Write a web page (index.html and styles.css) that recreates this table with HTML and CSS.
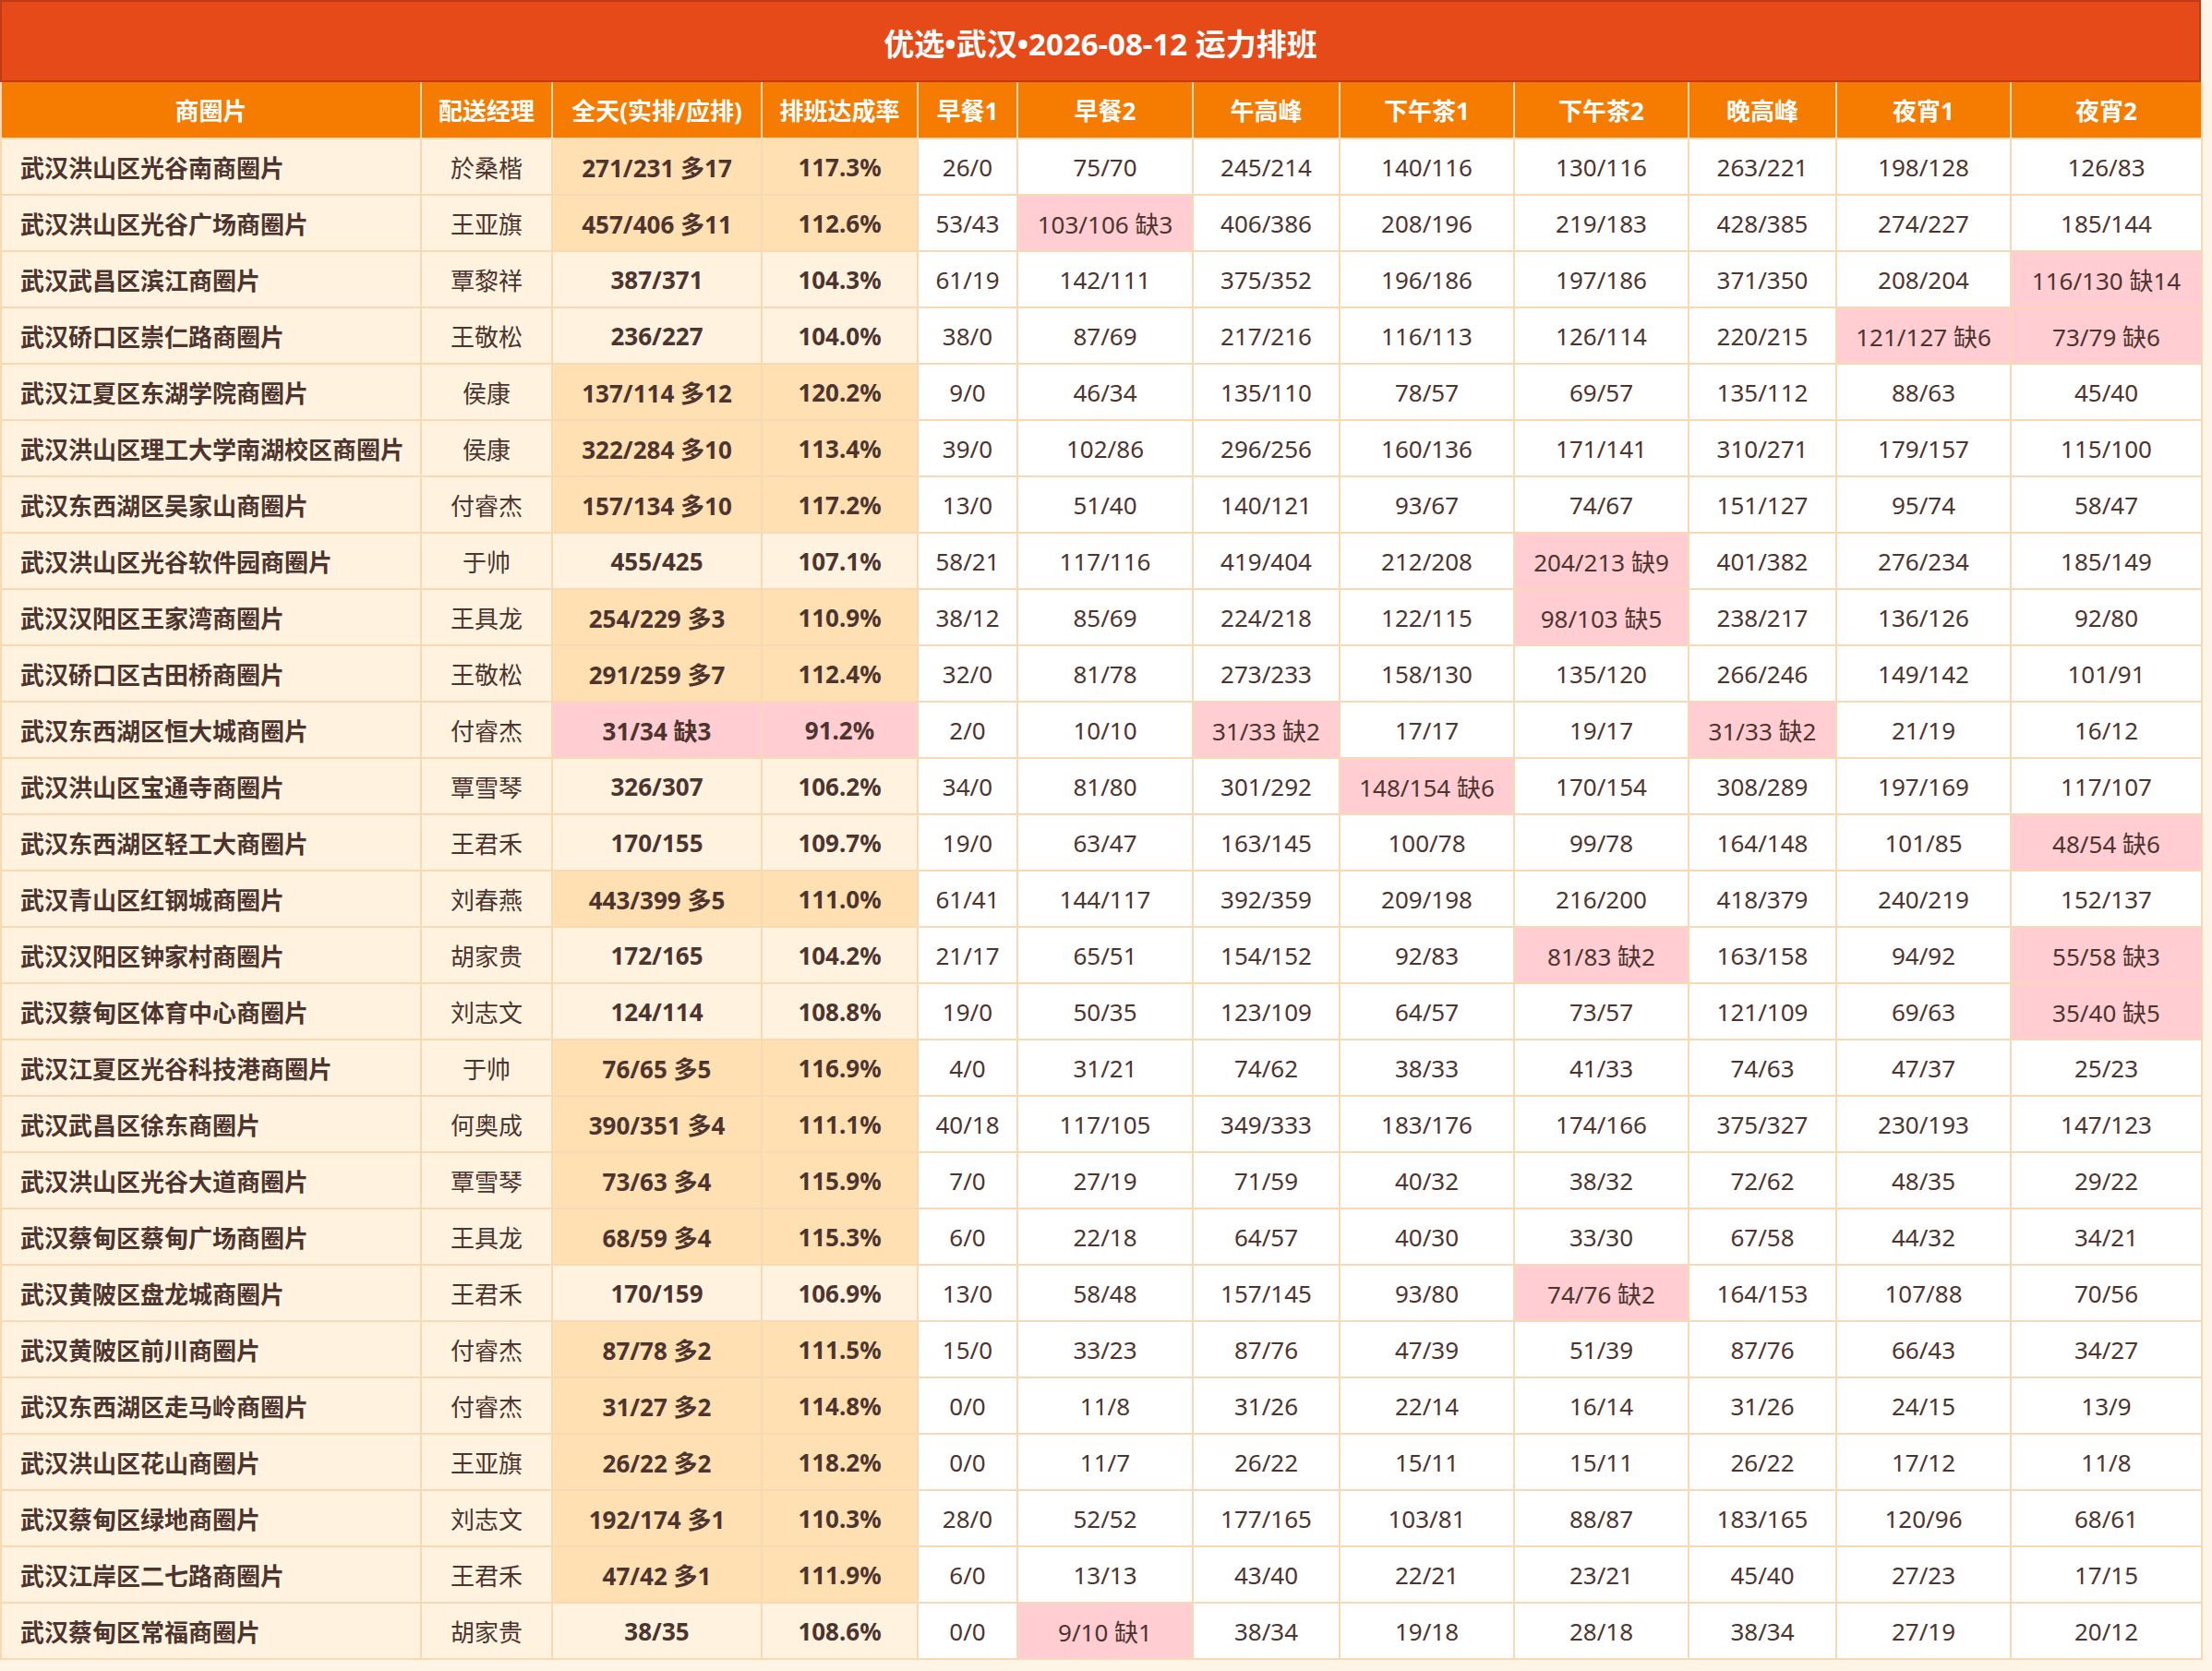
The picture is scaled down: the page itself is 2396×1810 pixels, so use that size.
FILE: index.html
```html
<!DOCTYPE html>
<html lang="zh-CN">
<head>
<meta charset="utf-8">
<title>运力排班</title>
<link rel="stylesheet" href="styles.css">
</head>
<body>
<div class="sheet">
  <div class="title">优选•武汉•2026-08-12 运力排班</div>
  <table class="grid">
    <colgroup>
      <col class="c-name"><col class="c-mgr"><col class="c-total"><col class="c-rate">
      <col class="c-b1"><col class="c-b2"><col class="c-noon"><col class="c-t1"><col class="c-t2"><col class="c-eve"><col class="c-n1"><col class="c-n2">
    </colgroup>
    <thead>
      <tr><th>商圈片</th><th>配送经理</th><th>全天(实排/应排)</th><th>排班达成率</th><th>早餐1</th><th>早餐2</th><th>午高峰</th><th>下午茶1</th><th>下午茶2</th><th>晚高峰</th><th>夜宵1</th><th>夜宵2</th></tr>
    </thead>
    <tbody>
      <tr><td class="name">武汉洪山区光谷南商圈片</td><td class="mgr">於桑楷</td><td class="total over">271/231 多17</td><td class="rate over">117.3%</td><td>26/0</td><td>75/70</td><td>245/214</td><td>140/116</td><td>130/116</td><td>263/221</td><td>198/128</td><td>126/83</td></tr>
      <tr><td class="name">武汉洪山区光谷广场商圈片</td><td class="mgr">王亚旗</td><td class="total over">457/406 多11</td><td class="rate over">112.6%</td><td>53/43</td><td class="short">103/106 缺3</td><td>406/386</td><td>208/196</td><td>219/183</td><td>428/385</td><td>274/227</td><td>185/144</td></tr>
      <tr><td class="name">武汉武昌区滨江商圈片</td><td class="mgr">覃黎祥</td><td class="total">387/371</td><td class="rate">104.3%</td><td>61/19</td><td>142/111</td><td>375/352</td><td>196/186</td><td>197/186</td><td>371/350</td><td>208/204</td><td class="short">116/130 缺14</td></tr>
      <tr><td class="name">武汉硚口区崇仁路商圈片</td><td class="mgr">王敬松</td><td class="total">236/227</td><td class="rate">104.0%</td><td>38/0</td><td>87/69</td><td>217/216</td><td>116/113</td><td>126/114</td><td>220/215</td><td class="short">121/127 缺6</td><td class="short">73/79 缺6</td></tr>
      <tr><td class="name">武汉江夏区东湖学院商圈片</td><td class="mgr">侯康</td><td class="total over">137/114 多12</td><td class="rate over">120.2%</td><td>9/0</td><td>46/34</td><td>135/110</td><td>78/57</td><td>69/57</td><td>135/112</td><td>88/63</td><td>45/40</td></tr>
      <tr><td class="name">武汉洪山区理工大学南湖校区商圈片</td><td class="mgr">侯康</td><td class="total over">322/284 多10</td><td class="rate over">113.4%</td><td>39/0</td><td>102/86</td><td>296/256</td><td>160/136</td><td>171/141</td><td>310/271</td><td>179/157</td><td>115/100</td></tr>
      <tr><td class="name">武汉东西湖区吴家山商圈片</td><td class="mgr">付睿杰</td><td class="total over">157/134 多10</td><td class="rate over">117.2%</td><td>13/0</td><td>51/40</td><td>140/121</td><td>93/67</td><td>74/67</td><td>151/127</td><td>95/74</td><td>58/47</td></tr>
      <tr><td class="name">武汉洪山区光谷软件园商圈片</td><td class="mgr">于帅</td><td class="total">455/425</td><td class="rate">107.1%</td><td>58/21</td><td>117/116</td><td>419/404</td><td>212/208</td><td class="short">204/213 缺9</td><td>401/382</td><td>276/234</td><td>185/149</td></tr>
      <tr><td class="name">武汉汉阳区王家湾商圈片</td><td class="mgr">王具龙</td><td class="total over">254/229 多3</td><td class="rate over">110.9%</td><td>38/12</td><td>85/69</td><td>224/218</td><td>122/115</td><td class="short">98/103 缺5</td><td>238/217</td><td>136/126</td><td>92/80</td></tr>
      <tr><td class="name">武汉硚口区古田桥商圈片</td><td class="mgr">王敬松</td><td class="total over">291/259 多7</td><td class="rate over">112.4%</td><td>32/0</td><td>81/78</td><td>273/233</td><td>158/130</td><td>135/120</td><td>266/246</td><td>149/142</td><td>101/91</td></tr>
      <tr><td class="name">武汉东西湖区恒大城商圈片</td><td class="mgr">付睿杰</td><td class="total short">31/34 缺3</td><td class="rate short">91.2%</td><td>2/0</td><td>10/10</td><td class="short">31/33 缺2</td><td>17/17</td><td>19/17</td><td class="short">31/33 缺2</td><td>21/19</td><td>16/12</td></tr>
      <tr><td class="name">武汉洪山区宝通寺商圈片</td><td class="mgr">覃雪琴</td><td class="total">326/307</td><td class="rate">106.2%</td><td>34/0</td><td>81/80</td><td>301/292</td><td class="short">148/154 缺6</td><td>170/154</td><td>308/289</td><td>197/169</td><td>117/107</td></tr>
      <tr><td class="name">武汉东西湖区轻工大商圈片</td><td class="mgr">王君禾</td><td class="total">170/155</td><td class="rate">109.7%</td><td>19/0</td><td>63/47</td><td>163/145</td><td>100/78</td><td>99/78</td><td>164/148</td><td>101/85</td><td class="short">48/54 缺6</td></tr>
      <tr><td class="name">武汉青山区红钢城商圈片</td><td class="mgr">刘春燕</td><td class="total over">443/399 多5</td><td class="rate over">111.0%</td><td>61/41</td><td>144/117</td><td>392/359</td><td>209/198</td><td>216/200</td><td>418/379</td><td>240/219</td><td>152/137</td></tr>
      <tr><td class="name">武汉汉阳区钟家村商圈片</td><td class="mgr">胡家贵</td><td class="total">172/165</td><td class="rate">104.2%</td><td>21/17</td><td>65/51</td><td>154/152</td><td>92/83</td><td class="short">81/83 缺2</td><td>163/158</td><td>94/92</td><td class="short">55/58 缺3</td></tr>
      <tr><td class="name">武汉蔡甸区体育中心商圈片</td><td class="mgr">刘志文</td><td class="total">124/114</td><td class="rate">108.8%</td><td>19/0</td><td>50/35</td><td>123/109</td><td>64/57</td><td>73/57</td><td>121/109</td><td>69/63</td><td class="short">35/40 缺5</td></tr>
      <tr><td class="name">武汉江夏区光谷科技港商圈片</td><td class="mgr">于帅</td><td class="total over">76/65 多5</td><td class="rate over">116.9%</td><td>4/0</td><td>31/21</td><td>74/62</td><td>38/33</td><td>41/33</td><td>74/63</td><td>47/37</td><td>25/23</td></tr>
      <tr><td class="name">武汉武昌区徐东商圈片</td><td class="mgr">何奥成</td><td class="total over">390/351 多4</td><td class="rate over">111.1%</td><td>40/18</td><td>117/105</td><td>349/333</td><td>183/176</td><td>174/166</td><td>375/327</td><td>230/193</td><td>147/123</td></tr>
      <tr><td class="name">武汉洪山区光谷大道商圈片</td><td class="mgr">覃雪琴</td><td class="total over">73/63 多4</td><td class="rate over">115.9%</td><td>7/0</td><td>27/19</td><td>71/59</td><td>40/32</td><td>38/32</td><td>72/62</td><td>48/35</td><td>29/22</td></tr>
      <tr><td class="name">武汉蔡甸区蔡甸广场商圈片</td><td class="mgr">王具龙</td><td class="total over">68/59 多4</td><td class="rate over">115.3%</td><td>6/0</td><td>22/18</td><td>64/57</td><td>40/30</td><td>33/30</td><td>67/58</td><td>44/32</td><td>34/21</td></tr>
      <tr><td class="name">武汉黄陂区盘龙城商圈片</td><td class="mgr">王君禾</td><td class="total">170/159</td><td class="rate">106.9%</td><td>13/0</td><td>58/48</td><td>157/145</td><td>93/80</td><td class="short">74/76 缺2</td><td>164/153</td><td>107/88</td><td>70/56</td></tr>
      <tr><td class="name">武汉黄陂区前川商圈片</td><td class="mgr">付睿杰</td><td class="total over">87/78 多2</td><td class="rate over">111.5%</td><td>15/0</td><td>33/23</td><td>87/76</td><td>47/39</td><td>51/39</td><td>87/76</td><td>66/43</td><td>34/27</td></tr>
      <tr><td class="name">武汉东西湖区走马岭商圈片</td><td class="mgr">付睿杰</td><td class="total over">31/27 多2</td><td class="rate over">114.8%</td><td>0/0</td><td>11/8</td><td>31/26</td><td>22/14</td><td>16/14</td><td>31/26</td><td>24/15</td><td>13/9</td></tr>
      <tr><td class="name">武汉洪山区花山商圈片</td><td class="mgr">王亚旗</td><td class="total over">26/22 多2</td><td class="rate over">118.2%</td><td>0/0</td><td>11/7</td><td>26/22</td><td>15/11</td><td>15/11</td><td>26/22</td><td>17/12</td><td>11/8</td></tr>
      <tr><td class="name">武汉蔡甸区绿地商圈片</td><td class="mgr">刘志文</td><td class="total over">192/174 多1</td><td class="rate over">110.3%</td><td>28/0</td><td>52/52</td><td>177/165</td><td>103/81</td><td>88/87</td><td>183/165</td><td>120/96</td><td>68/61</td></tr>
      <tr><td class="name">武汉江岸区二七路商圈片</td><td class="mgr">王君禾</td><td class="total over">47/42 多1</td><td class="rate over">111.9%</td><td>6/0</td><td>13/13</td><td>43/40</td><td>22/21</td><td>23/21</td><td>45/40</td><td>27/23</td><td>17/15</td></tr>
      <tr><td class="name">武汉蔡甸区常福商圈片</td><td class="mgr">胡家贵</td><td class="total">38/35</td><td class="rate">108.6%</td><td>0/0</td><td class="short">9/10 缺1</td><td>38/34</td><td>19/18</td><td>28/18</td><td>38/34</td><td>27/19</td><td>20/12</td></tr>
    </tbody>
  </table>
</div>
</body>
</html>
```

FILE: styles.css
```css
html, body {
  margin: 0;
  padding: 0;
  background: #fff5e6;
}

body {
  font-family: "Noto Sans", "Noto Sans CJK SC", sans-serif;
  color: #4e342e;
}

.sheet {
  width: 2384px;
}

.title {
  box-sizing: border-box;
  height: 89px;
  padding-top: 3px;
  background: #e64a19;
  border: 2px solid #c13a18;
  color: #ffffff;
  font-size: 33px;
  font-weight: 700;
  display: flex;
  align-items: center;
  justify-content: center;
}

.grid {
  width: 2384px;
  border-collapse: collapse;
  table-layout: fixed;
}

.c-name { width: 455px; }
.c-mgr { width: 142px; }
.c-total { width: 227px; }
.c-rate { width: 169px; }
.c-b1 { width: 108px; }
.c-b2 { width: 190px; }
.c-noon { width: 159px; }
.c-t1 { width: 189px; }
.c-t2 { width: 189px; }
.c-eve { width: 160px; }
.c-n1 { width: 189px; }
.c-n2 { width: 207px; }

.grid tr {
  height: 61px;
}

.grid th,
.grid td {
  border: 2px solid #f8d9b6;
  padding: 0 4px;
  font-size: 26px;
  text-align: center;
  white-space: nowrap;
  background: #ffffff;
}

.grid th {
  background: #f57c00;
  color: #ffffff;
  font-weight: 700;
  border-top: none;
}

.grid td.name {
  text-align: left;
  padding-left: 20px;
  font-weight: 700;
  background: #fff3e0;
}

.grid td.mgr {
  background: #fff3e0;
}

.grid td.total,
.grid td.rate {
  font-weight: 700;
  background: #fff3e0;
}

.grid td.over {
  background: #ffe0b2;
}

.grid td.short {
  background: #ffcdd2;
}
```
